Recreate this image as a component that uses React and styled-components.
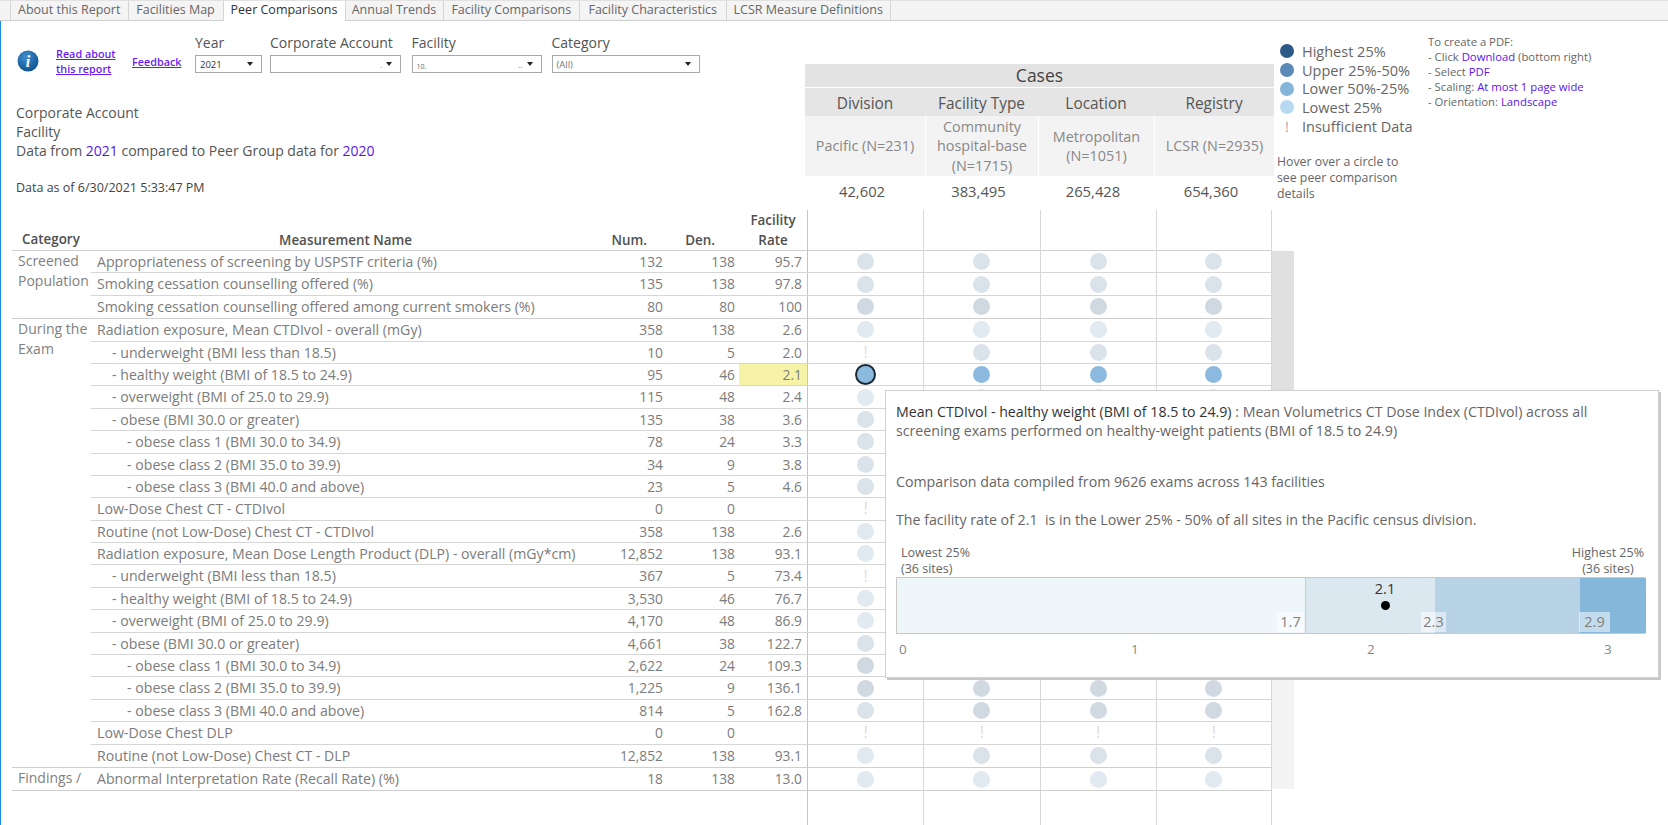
import React from "react";
import styled, { createGlobalStyle } from "styled-components";

const FONT = `"Open Sans", Lato, "Liberation Sans", sans-serif`;

const GlobalStyle = createGlobalStyle`
  html, body {
    margin: 0;
    padding: 0;
    background: #fff;
    font-family: ${FONT};
  }
  * { box-sizing: border-box; }
`;

// Data
const TABS = [
  { label: "About this Report", width: 117.5 },
  { label: "Facilities Map", width: 95 },
  { label: "Peer Comparisons", width: 122, active: true },
  { label: "Annual Trends", width: 98 },
  { label: "Facility Comparisons", width: 136.5 },
  { label: "Facility Characteristics", width: 146.5 },
  { label: "LCSR Measure Definitions", width: 165.5 },
];

const GROUPS = [
  {
    name: ["Screened", "Population"],
    rows: [
      ["Appropriateness of screening by USPSTF criteria (%)", 0, "132", "138", "95.7", "bbbb"],
      ["Smoking cessation counselling offered (%)", 0, "135", "138", "97.8", "bbbb"],
      ["Smoking cessation counselling offered among current smokers (%)", 0, "80", "80", "100", "cccc"],
    ],
  },
  {
    name: ["During the", "Exam"],
    rows: [
      ["Radiation exposure, Mean CTDIvol - overall (mGy)", 0, "358", "138", "2.6", "aaaa"],
      ["- underweight (BMI less than 18.5)", 1, "10", "5", "2.0", "!bbb"],
      ["- healthy weight (BMI of 18.5 to 24.9)", 1, "95", "46", "2.1", "rsss", true],
      ["- overweight (BMI of 25.0 to 29.9)", 1, "115", "48", "2.4", "aaaa"],
      ["- obese (BMI 30.0 or greater)", 1, "135", "38", "3.6", "bbbb"],
      ["- obese class 1 (BMI 30.0 to 34.9)", 2, "78", "24", "3.3", "bbbb"],
      ["- obese class 2 (BMI 35.0 to 39.9)", 2, "34", "9", "3.8", "bbbb"],
      ["- obese class 3 (BMI 40.0 and above)", 2, "23", "5", "4.6", "bbbb"],
      ["Low-Dose Chest CT - CTDIvol", 0, "0", "0", "", "!!!!"],
      ["Routine (not Low-Dose) Chest CT - CTDIvol", 0, "358", "138", "2.6", "aaaa"],
      ["Radiation exposure, Mean Dose Length Product (DLP) - overall (mGy*cm)", 0, "12,852", "138", "93.1", "aaaa"],
      ["- underweight (BMI less than 18.5)", 1, "367", "5", "73.4", "!bbb"],
      ["- healthy weight (BMI of 18.5 to 24.9)", 1, "3,530", "46", "76.7", "aaaa"],
      ["- overweight (BMI of 25.0 to 29.9)", 1, "4,170", "48", "86.9", "aaaa"],
      ["- obese (BMI 30.0 or greater)", 1, "4,661", "38", "122.7", "bbbb"],
      ["- obese class 1 (BMI 30.0 to 34.9)", 2, "2,622", "24", "109.3", "cccc"],
      ["- obese class 2 (BMI 35.0 to 39.9)", 2, "1,225", "9", "136.1", "cccc"],
      ["- obese class 3 (BMI 40.0 and above)", 2, "814", "5", "162.8", "bccc"],
      ["Low-Dose Chest DLP", 0, "0", "0", "", "!!!!"],
      ["Routine (not Low-Dose) Chest CT - DLP", 0, "12,852", "138", "93.1", "abbb"],
    ],
  },
  {
    name: ["Findings /"],
    rows: [["Abnormal Interpretation Rate (Recall Rate) (%)", 0, "18", "138", "13.0", "aaaa"]],
  },
];

const LEGEND = [
  { label: "Highest 25%", color: "#2c5985" },
  { label: "Upper 25%-50%", color: "#5b8ab8" },
  { label: "Lower 50%-25%", color: "#85b5da" },
  { label: "Lowest 25%", color: "#b8daf0" },
  { label: "Insufficient Data" },
];

const CASES = [
  { head: "Division", group: ["Pacific (N=231)"], total: "42,602" },
  { head: "Facility Type", group: ["Community", "hospital-base", "(N=1715)"], total: "383,495" },
  { head: "Location", group: ["Metropolitan", "(N=1051)"], total: "265,428" },
  { head: "Registry", group: ["LCSR (N=2935)"], total: "654,360" },
];

const DOT_COLORS = { a: "#e1e9f1", b: "#dae2ea", c: "#d0d8e2", s: "#8cbade", r: "#8cbade" };

const BANDS = [
  { width: 408, color: "#eff6fa" },
  { width: 130, color: "#dce8ef" },
  { width: 144, color: "#b8d3e6" },
  { width: 67, color: "#85b7da" },
];

// Styled
const Page = styled.div`
  position: relative;
  width: 1668px;
  height: 825px;
  overflow: hidden;
  display: flex;
  flex-direction: column;
`;

const TabBar = styled.div`
  flex: none;
  display: flex;
  align-items: flex-end;
  height: 21px;
  padding-left: 10px;
  background: #f4f4f4;
  border-top: 1px solid #e2e2e2;
  border-bottom: 1px solid #cfcfcf;
`;

const Tab = styled.div`
  width: ${(p) => p.$width}px;
  height: ${(p) => (p.$active ? "20px" : "19px")};
  margin-bottom: ${(p) => (p.$active ? "-1px" : "0")};
  line-height: 18px;
  text-align: center;
  white-space: nowrap;
  font-size: 12.5px;
  color: ${(p) => (p.$active ? "#333" : "#666")};
  background: ${(p) => (p.$active ? "#fff" : "transparent")};
  border-left: 1px solid #d4d4d4;
  border-right: ${(p) => (p.$last ? "1px solid #d4d4d4" : "none")};
`;

const Body = styled.div`
  flex: 1;
  min-height: 0;
  display: flex;
  flex-direction: column;
  border-left: 1px solid #1a8fe3;
`;

const TopSection = styled.div`
  flex: none;
  display: flex;
  height: 189px;
`;

const LeftBlock = styled.div`
  flex: none;
  width: 804px;
  padding: 13px 0 0 15px;
`;

const FilterRow = styled.div`
  display: flex;
  align-items: flex-end;
`;

const InfoIcon = styled.svg`
  flex: none;
  width: 22px;
  height: 22px;
  margin: 0 17px 1px 1px;
`;

const ReportLink = styled.a`
  flex: none;
  color: #6a1cf0;
  font-size: 10.8px;
  font-weight: 600;
  line-height: 15px;
  text-decoration: underline;
`;

const ReadAbout = styled(ReportLink)`
  width: 76px;
  margin-bottom: -3px;
`;

const Feedback = styled(ReportLink)`
  width: 63px;
  margin-bottom: 4px;
`;

const Filters = styled.div`
  display: flex;
  gap: 8px;
`;

const FilterField = styled.div`
  width: ${(p) => p.$width}px;
  margin-right: ${(p) => p.$gap || 0}px;
`;

const FilterLabel = styled.div`
  height: 18px;
  margin-bottom: 3px;
  line-height: 18px;
  font-size: 14px;
  white-space: nowrap;
  color: #555;
`;

const SelectBox = styled.div`
  position: relative;
  display: flex;
  align-items: center;
  height: 18px;
  padding-left: 4px;
  font-size: 9.5px;
  color: ${(p) => (p.$muted ? "#777" : "#333")};
  border: 1px solid #a8a8a8;
  background: #fff;
  &::after {
    content: "";
    position: absolute;
    right: 8px;
    top: 6px;
    border-left: 3px solid transparent;
    border-right: 3px solid transparent;
    border-top: 4px solid #222;
  }
`;

const Masked = styled.span`
  font-size: 7px;
  color: #666;
  padding-top: 4px;
`;

const TrailDots = styled.span`
  position: absolute;
  right: 18px;
  bottom: 3px;
  font-size: 8px;
  line-height: 8px;
  color: #777;
`;

const TitleBlock = styled.div`
  margin-top: 30px;
  font-size: 14px;
  line-height: 19px;
  color: #555;
`;

const PurpleText = styled.span`
  color: #5a14f0;
`;

const AsOf = styled.div`
  margin-top: 20px;
  font-size: 12.5px;
  line-height: 16px;
  color: #444;
`;

const CasesBlock = styled.div`
  flex: none;
  width: 469px;
  margin-top: 43px;
`;

const CasesTitle = styled.div`
  height: 23px;
  margin-bottom: 1px;
  line-height: 23px;
  text-align: center;
  font-size: 17.5px;
  color: #444;
  background: #e3e3e3;
`;

const CasesGrid = styled.div`
  display: grid;
  grid-template-columns: 120px 113px 116px 120px;
`;

const CasesHead = styled.div`
  height: 28px;
  line-height: 31px;
  text-align: center;
  font-size: 15.4px;
  color: #555;
  background: #e5e5e5;
`;

const CasesGroup = styled.div`
  display: flex;
  flex-direction: column;
  justify-content: center;
  height: 60px;
  font-size: 14.4px;
  line-height: 19.5px;
  text-align: center;
  white-space: nowrap;
  color: #888;
  background: #f3f3f3;
  border-left: ${(p) => (p.$first ? "none" : "1px solid #fff")};
`;

const CasesTotal = styled.div`
  height: 29px;
  line-height: 30px;
  text-align: center;
  font-size: 14.8px;
  color: #555;
  padding-right: 6px;
`;

const LegendBlock = styled.div`
  flex: none;
  width: 151px;
  margin-left: 3px;
  padding-top: 21px;
`;

const LegendRow = styled.div`
  display: flex;
  align-items: center;
  height: 18.7px;
  font-size: 14.5px;
  white-space: nowrap;
  color: #666;
`;

const LegendDot = styled.span`
  flex: none;
  width: 14px;
  height: 14px;
  margin: 0 8px 0 3px;
  border-radius: 50%;
  background: ${(p) => p.$color};
`;

const LegendBang = styled.span`
  flex: none;
  width: 14px;
  margin: 0 8px 0 3px;
  text-align: center;
  color: #aaa;
`;

const HoverNote = styled.div`
  margin-top: 19px;
  width: 138px;
  font-size: 12.3px;
  line-height: 16px;
  color: #666;
`;

const PdfNotes = styled.div`
  flex: none;
  padding-top: 13px;
  font-size: 11.3px;
  line-height: 15px;
  color: #666;
`;

const TableWrap = styled.div`
  flex: 1;
  min-height: 0;
  display: flex;
  padding-left: 11px;
`;

const Table = styled.div`
  flex: none;
  width: 1260px;
  display: flex;
  flex-direction: column;
`;

const HeaderRow = styled.div`
  flex: none;
  display: flex;
  height: 41px;
  border-bottom: 1px solid #cfcfcf;
`;

const HeadText = styled.div`
  align-self: end;
  font-size: 13.4px;
  font-weight: 600;
  line-height: 20px;
  padding-bottom: 1px;
  color: #505050;
`;

const CategoryHead = styled(HeadText)`
  flex: none;
  width: 79px;
  align-self: flex-end;
  padding-left: 10px;
`;

const RowGrid = styled.div`
  flex: 1;
  display: grid;
  grid-template-columns: 509px 67px 72px 68px repeat(4, 116.25px);
`;

const NameHead = styled(HeadText)`
  text-align: center;
`;

const NumHead = styled(HeadText)`
  text-align: right;
  padding-right: ${(p) => p.$pad}px;
`;

const RateHead = styled(HeadText)`
  text-align: center;
`;

const GuideCell = styled.div`
  border-left: 1px solid ${(p) => (p.$strong ? "#c4c4c4" : "#d8d8d8")};
  border-right: ${(p) => (p.$last ? "1px solid #d8d8d8" : "none")};
`;

const Group = styled.div`
  flex: none;
  display: flex;
  border-bottom: 1px solid #cfcfcf;
`;

const GroupName = styled.div`
  flex: none;
  width: 79px;
  padding: 0 0 0 6px;
  overflow: hidden;
  font-size: 14px;
  line-height: 20px;
  white-space: nowrap;
  color: #808080;
`;

const GroupRows = styled.div`
  flex: 1;
  display: flex;
  flex-direction: column;
`;

const Row = styled(RowGrid)`
  flex: none;
  height: 22.4px;
  border-bottom: ${(p) => (p.$last ? "none" : "1px solid #d6d6d6")};
  font-size: 14.15px;
  line-height: 21px;
  color: #7c7c7c;
`;

const NameCell = styled.div`
  padding-left: ${(p) => 6 + p.$indent * 15}px;
  white-space: nowrap;
`;

const NumCell = styled.div`
  text-align: right;
  font-size: 13.8px;
  padding-right: ${(p) => p.$pad}px;
`;

const RateCell = styled(NumCell)`
  background: ${(p) => (p.$highlight ? "#f6f3a6" : "transparent")};
`;

const DotCell = styled(GuideCell)`
  display: flex;
  align-items: center;
  justify-content: center;
`;

const Dot = styled.span`
  width: 17px;
  height: 17px;
  border-radius: 50%;
  background: ${(p) => DOT_COLORS[p.$tone]};
  box-shadow: ${(p) => (p.$tone === "r" ? "0 0 0 2px #1c2a33" : "none")};
`;

const Bang = styled.span`
  font-size: 16px;
  color: #dcdcdc;
`;

const Filler = styled(RowGrid)`
  flex: 1;
  margin-left: 79px;
`;

const Scrollbar = styled.div`
  flex: none;
  width: 22px;
  height: 538px;
  margin-top: 41px;
  background: #f3f3f3;
`;

const ScrollThumb = styled.div`
  height: 425px;
  background: #e0e0e0;
`;

const Tooltip = styled.div`
  position: absolute;
  left: 885px;
  top: 390px;
  width: 774px;
  height: 288px;
  padding: 11px 12px 0 10px;
  background: #fff;
  border: 1px solid #d0d0d0;
  box-shadow: 2px 2px 0 #c8c8c8;
  font-size: 14.2px;
  line-height: 19px;
  color: #666;
`;

const TipLead = styled.div`
  width: 705px;
`;

const TipStrong = styled.span`
  color: #333;
`;

const TipLine = styled.div`
  margin-top: ${(p) => p.$gap}px;
`;

const EndLabels = styled.div`
  display: flex;
  justify-content: space-between;
  margin-top: 16px;
  height: 32px;
  font-size: 12.5px;
  line-height: 16px;
`;

const LowEnd = styled.div`
  padding-left: 5px;
`;

const HighEnd = styled.div`
  text-align: center;
  padding-right: 2px;
`;

const Chart = styled.div`
  position: relative;
  display: flex;
  width: 749px;
  height: 57px;
  border: 1px solid #c8c8c8;
  border-right: none;
`;

const Band = styled.div`
  flex: none;
  width: ${(p) => p.$width}px;
  background: ${(p) => p.$color};
  border-left: ${(p) => (p.$first ? "none" : "1px solid #c4ced6")};
`;

const QuartileBadge = styled.span`
  position: absolute;
  left: ${(p) => p.$left}px;
  bottom: 1px;
  width: ${(p) => p.$width}px;
  height: 20px;
  text-align: center;
  line-height: 20px;
  font-size: 14.5px;
  color: #808080;
  background: rgba(255, 255, 255, 0.5);
`;

const PointLabel = styled.span`
  position: absolute;
  left: 470px;
  top: 1px;
  width: 36px;
  text-align: center;
  font-size: 14.5px;
  color: #333;
`;

const PointDot = styled.span`
  position: absolute;
  left: 484px;
  top: 23px;
  width: 9px;
  height: 9px;
  border-radius: 50%;
  background: #000;
`;

const Axis = styled.div`
  position: relative;
  height: 30px;
  font-size: 13.5px;
  line-height: 30px;
  color: #888;
`;

const AxisTick = styled.span`
  position: absolute;
  left: ${(p) => p.$left}px;
`;

const Info = () => (
  <InfoIcon viewBox="0 0 22 22">
    <defs>
      <radialGradient id="infoFill" cx="40%" cy="30%" r="75%">
        <stop offset="0%" stopColor="#3f8fd0" />
        <stop offset="100%" stopColor="#0f4f8c" />
      </radialGradient>
    </defs>
    <ellipse cx="11" cy="11" rx="10.5" ry="10.5" fill="url(#infoFill)" />
    <text
      x="11"
      y="17"
      textAnchor="middle"
      fontSize="16"
      fontWeight="700"
      fontStyle="italic"
      fontFamily="'Liberation Serif', serif"
      fill="#fff"
    >
      i
    </text>
  </InfoIcon>
);

const Cell = ({ code, index }) => (
  <DotCell $strong={index === 0} $last={index === 3}>
    {code === "!" ? <Bang>!</Bang> : <Dot $tone={code} />}
  </DotCell>
);

export default function App() {
  return (
    <Page>
      <GlobalStyle />
      <TabBar>
        {TABS.map((t, i) => (
          <Tab key={t.label} $width={t.width} $active={t.active} $last={i === TABS.length - 1}>
            {t.label}
          </Tab>
        ))}
      </TabBar>

      <Body>
        <TopSection>
          <LeftBlock>
            <FilterRow>
              <Info />
              <ReadAbout>
                Read about
                <br />
                this report
              </ReadAbout>
              <Feedback>Feedback</Feedback>
              <Filters>
                <FilterField $width={67}>
                  <FilterLabel>Year</FilterLabel>
                  <SelectBox>2021</SelectBox>
                </FilterField>
                <FilterField $width={131} $gap={2.5}>
                  <FilterLabel>Corporate Account</FilterLabel>
                  <SelectBox>
                    <TrailDots>.</TrailDots>
                  </SelectBox>
                </FilterField>
                <FilterField $width={130} $gap={2}>
                  <FilterLabel>Facility</FilterLabel>
                  <SelectBox>
                    <Masked>10.</Masked>
                    <TrailDots>..</TrailDots>
                  </SelectBox>
                </FilterField>
                <FilterField $width={148}>
                  <FilterLabel>Category</FilterLabel>
                  <SelectBox $muted>(All)</SelectBox>
                </FilterField>
              </Filters>
            </FilterRow>
            <TitleBlock>
              <div>Corporate Account</div>
              <div>Facility</div>
              <div>
                Data from <PurpleText>2021</PurpleText> compared to Peer Group data for{" "}
                <PurpleText>2020</PurpleText>
              </div>
            </TitleBlock>
            <AsOf>Data as of 6/30/2021 5:33:47 PM</AsOf>
          </LeftBlock>

          <CasesBlock>
            <CasesTitle>Cases</CasesTitle>
            <CasesGrid>
              {CASES.map((c) => (
                <CasesHead key={c.head}>{c.head}</CasesHead>
              ))}
              {CASES.map((c, i) => (
                <CasesGroup key={c.head} $first={i === 0}>
                  {c.group.map((line) => (
                    <div key={line}>{line}</div>
                  ))}
                </CasesGroup>
              ))}
              {CASES.map((c) => (
                <CasesTotal key={c.head}>{c.total}</CasesTotal>
              ))}
            </CasesGrid>
          </CasesBlock>

          <LegendBlock>
            {LEGEND.map((l) => (
              <LegendRow key={l.label}>
                {l.color ? <LegendDot $color={l.color} /> : <LegendBang>!</LegendBang>}
                {l.label}
              </LegendRow>
            ))}
            <HoverNote>Hover over a circle to see peer comparison details</HoverNote>
          </LegendBlock>

          <PdfNotes>
            <div>To create a PDF:</div>
            <div>
              - Click <PurpleText>Download</PurpleText> (bottom right)
            </div>
            <div>
              - Select <PurpleText>PDF</PurpleText>
            </div>
            <div>
              - Scaling: <PurpleText>At most 1 page wide</PurpleText>
            </div>
            <div>
              - Orientation: <PurpleText>Landscape</PurpleText>
            </div>
          </PdfNotes>
        </TopSection>

        <TableWrap>
          <Table>
            <HeaderRow>
              <CategoryHead>Category</CategoryHead>
              <RowGrid>
                <NameHead>Measurement Name</NameHead>
                <NumHead $pad={20}>Num.</NumHead>
                <NumHead $pad={24}>Den.</NumHead>
                <RateHead>
                  Facility
                  <br />
                  Rate
                </RateHead>
                {[0, 1, 2, 3].map((i) => (
                  <GuideCell key={i} $strong={i === 0} $last={i === 3} />
                ))}
              </RowGrid>
            </HeaderRow>

            {GROUPS.map((g) => (
              <Group key={g.name[0]}>
                <GroupName>
                  {g.name.map((line) => (
                    <div key={line}>{line}</div>
                  ))}
                </GroupName>
                <GroupRows>
                  {g.rows.map(([name, indent, num, den, rate, cells, highlight], i) => (
                    <Row key={name + i} $last={i === g.rows.length - 1}>
                      <NameCell $indent={indent}>{name}</NameCell>
                      <NumCell $pad={4}>{num}</NumCell>
                      <NumCell $pad={4}>{den}</NumCell>
                      <RateCell $pad={5} $highlight={highlight}>
                        {rate}
                      </RateCell>
                      {[...cells].map((code, c) => (
                        <Cell key={c} code={code} index={c} />
                      ))}
                    </Row>
                  ))}
                </GroupRows>
              </Group>
            ))}

            <Filler>
              <div />
              <div />
              <div />
              <div />
              {[0, 1, 2, 3].map((i) => (
                <GuideCell key={i} $strong={i === 0} $last={i === 3} />
              ))}
            </Filler>
          </Table>
          <Scrollbar>
            <ScrollThumb />
          </Scrollbar>
        </TableWrap>
      </Body>

      <Tooltip>
        <TipLead>
          <TipStrong>Mean CTDIvol - healthy weight (BMI of 18.5 to 24.9)</TipStrong> : Mean Volumetrics CT
          Dose Index (CTDIvol) across all screening exams performed on healthy-weight patients (BMI of 18.5
          to 24.9)
        </TipLead>
        <TipLine $gap={32}>Comparison data compiled from 9626 exams across 143 facilities</TipLine>
        <TipLine $gap={19}>
          The facility rate of 2.1&nbsp; is in the Lower 25% - 50% of all sites in the Pacific census
          division.
        </TipLine>
        <EndLabels>
          <LowEnd>
            Lowest 25%
            <br />
            (36 sites)
          </LowEnd>
          <HighEnd>
            Highest 25%
            <br />
            (36 sites)
          </HighEnd>
        </EndLabels>
        <Chart>
          {BANDS.map((b, i) => (
            <Band key={b.color} $width={b.width} $color={b.color} $first={i === 0} />
          ))}
          <QuartileBadge $left={380} $width={27}>
            1.7
          </QuartileBadge>
          <QuartileBadge $left={524} $width={25}>
            2.3
          </QuartileBadge>
          <QuartileBadge $left={682} $width={31}>
            2.9
          </QuartileBadge>
          <PointLabel>2.1</PointLabel>
          <PointDot />
        </Chart>
        <Axis>
          <AxisTick $left={3}>0</AxisTick>
          <AxisTick $left={235}>1</AxisTick>
          <AxisTick $left={471}>2</AxisTick>
          <AxisTick $left={708}>3</AxisTick>
        </Axis>
      </Tooltip>
    </Page>
  );
}
